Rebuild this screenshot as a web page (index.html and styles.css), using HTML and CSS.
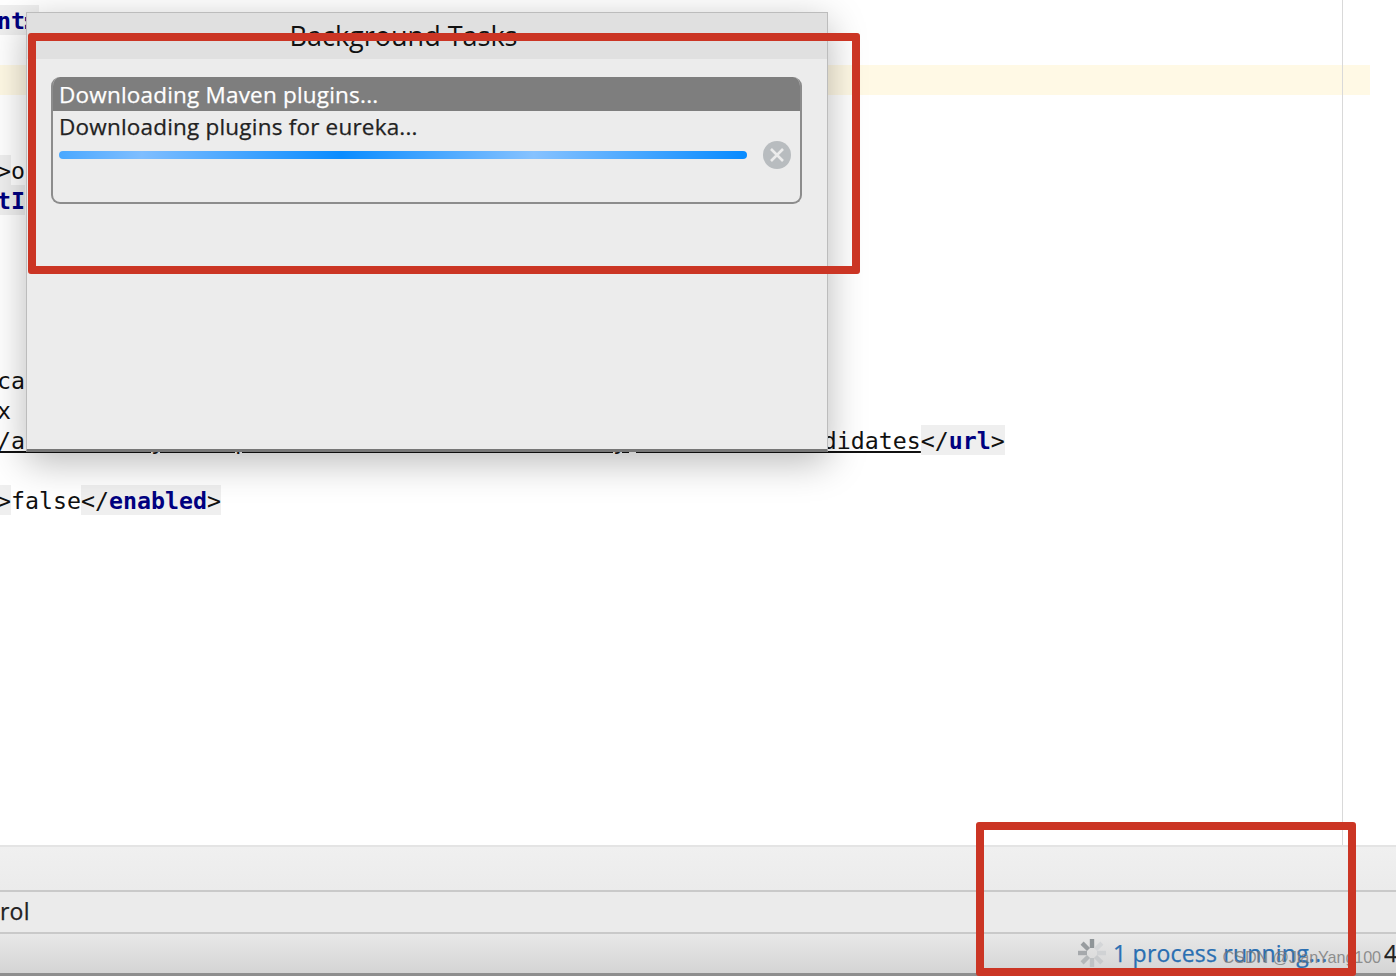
FILE: index.html
```html
<!DOCTYPE html>
<html lang="en">
<head>
<meta charset="utf-8">
<title>Background Tasks</title>
<link rel="stylesheet" href="styles.css">
</head>
<body>
<div class="app">
  <main class="editor">
    <div class="margin-guide"></div>
    <div class="line"><span class="tag"><b>nt</b><b class="colon">:</b></span></div>
    <div class="line"></div>
    <div class="line current"></div>
    <div class="line"></div>
    <div class="line"></div>
    <div class="line"><span class="tag">&gt;</span>o</div>
    <div class="line"><span class="tag"><b>tI</b></span></div>
    <div class="line"></div>
    <div class="line"></div>
    <div class="line"></div>
    <div class="line"></div>
    <div class="line"></div>
    <div class="line">ca</div>
    <div class="line">x c</div>
    <div class="line"><u>/artifactory/lib-plutonium-releaseartifactory,release-rccandidates</u><span class="tag">&lt;/<b>url</b>&gt;</span></div>
    <div class="line"></div>
    <div class="line"><span class="tag">&gt;</span>false<span class="tag">&lt;/<b>enabled</b>&gt;</span></div>
  </main>

  <footer class="bars">
    <div class="bar bar-tools"></div>
    <div class="bar bar-tabs"><span class="tab-label">rol</span></div>
    <div class="bar bar-status">
      <svg class="spinner" width="30" height="30" viewBox="0 0 30 30" aria-hidden="true">
        <g stroke-width="4.4" fill="none">
          <path d="M15 1v9" stroke="#8f9598"/>
          <path d="M24.9 5.1l-6.4 6.4" stroke="#d4d6d8"/>
          <path d="M29 15h-9" stroke="#d0d2d4"/>
          <path d="M24.9 24.9l-6.4-6.4" stroke="#c8cacc"/>
          <path d="M15 29v-9" stroke="#bfc2c4"/>
          <path d="M5.1 24.9l6.4-6.4" stroke="#b4b7b9"/>
          <path d="M1 15h9" stroke="#a6a9ac"/>
          <path d="M5.1 5.1l6.4 6.4" stroke="#989c9f"/>
        </g>
      </svg>
      <span class="process">1 process running...</span>
      <span class="watermark">CSDN @JianYang100</span>
      <span class="position">4</span>
    </div>
  </footer>

  <section class="dialog">
    <header class="dialog-title">Background Tasks</header>
    <div class="dialog-body">
      <div class="task">
        <div class="task-head">Downloading Maven plugins...</div>
        <div class="task-text">Downloading plugins for eureka...</div>
        <div class="task-progress">
          <div class="progress"></div>
          <svg class="cancel" width="30" height="30" viewBox="0 0 30 30" aria-hidden="true">
            <circle cx="15" cy="15" r="14" fill="#b8bcbf"/>
            <path d="M9 9l12 12M21 9L9 21" stroke="#ececec" stroke-width="2.6" fill="none"/>
          </svg>
        </div>
      </div>
    </div>
  </section>

  <div class="mark mark-dialog"></div>
  <div class="mark mark-status"></div>
</div>
</body>
</html>
```

FILE: styles.css
```css
* { box-sizing: border-box; }

html, body {
  margin: 0;
  height: 100%;
  background: #fff;
}

.app {
  position: relative;
  display: flex;
  flex-direction: column;
  width: 1396px;
  height: 976px;
  overflow: hidden;
  font-family: "Open Sans", "DejaVu Sans", sans-serif;
}

/* Editor */
.editor {
  position: relative;
  flex: 1;
  padding-top: 5px;
  background: #fff;
  font-family: "DejaVu Sans Mono", monospace;
  font-size: 23.25px;
  color: #111;
}

.margin-guide {
  position: absolute;
  top: 0;
  bottom: 0;
  left: 1342px;
  width: 1px;
  background: #d9d9d9;
}

.line {
  height: 30px;
  line-height: 32px;
  margin-left: -3px;
  white-space: pre;
}

.line.current {
  width: 1373px;
  background: #fff9e5;
}

.tag {
  display: inline-block;
  height: 30px;
  background: #efefef;
}

.tag b {
  color: #000080;
}

.tag .colon {
  margin-left: -5px;
  padding-right: 5px;
}

.line u {
  text-underline-offset: 2px;
}

/* Bottom bars */
.bars {
  flex: none;
  font-size: 23px;
  letter-spacing: 0.2px;
  -webkit-text-stroke: 0.25px;
}

.bar {
  display: flex;
  align-items: center;
  background: linear-gradient(#f0f0f0, #ebebeb);
}

.bar-tools {
  height: 47px;
  border-top: 2px solid #e4e4e4;
  border-bottom: 2px solid #c9c9c9;
}

.bar-tabs {
  height: 42px;
  padding-bottom: 3px;
  border-bottom: 2px solid #c9c9c9;
  background: #ebebeb;
}

.tab-label {
  color: #222;
}

.bar-status {
  justify-content: flex-end;
  height: 42px;
  padding-bottom: 2px;
  border-bottom: 3px solid #8e8e8e;
  background: linear-gradient(#e8e8e8, #d4d4d4);
}

.spinner {
  flex: none;
  margin-right: 6px;
}

.process {
  color: #2a6fb2;
  white-space: nowrap;
}

.watermark {
  margin-left: -105px;
  margin-top: 9px;
  font-family: "Liberation Sans", sans-serif;
  font-size: 16.2px;
  letter-spacing: -0.1px;
  -webkit-text-stroke: 0;
  color: rgba(120, 120, 120, 0.8);
  white-space: nowrap;
}

.position {
  margin-left: 3px;
  width: 12px;
  overflow: hidden;
  color: #222;
}

/* Dialog */
.dialog {
  position: absolute;
  top: 12px;
  left: 26px;
  width: 802px;
  height: 440px;
  display: flex;
  flex-direction: column;
  border: 1px solid #bcbcbc;
  border-bottom: 3px solid #777;
  background: #ececec;
  box-shadow: 0 10px 36px rgba(0, 0, 0, 0.28);
}

.dialog-title {
  flex: none;
  height: 46px;
  padding-right: 47px;
  text-align: center;
  font-size: 27px;
  line-height: 46px;
  color: #111;
  background: #e0e0e0;
}

.dialog-body {
  flex: 1;
  padding: 18px 25px 0 24px;
}

.task {
  height: 127px;
  border: 2px solid #8c8c8c;
  border-top: 0;
  border-radius: 9px;
  overflow: hidden;
  font-size: 22.5px;
  letter-spacing: 0.2px;
  -webkit-text-stroke: 0.25px;
  color: #222;
}

.task-head {
  height: 34px;
  margin: 0 -2px;
  padding-left: 8px;
  line-height: 35px;
  color: #fff;
  background: #7e7e7e;
}

.task-text {
  height: 29px;
  padding-left: 6px;
  line-height: 32px;
}

.task-progress {
  display: flex;
  align-items: center;
  gap: 15px;
  padding-left: 6px;
}

.progress {
  width: 688px;
  height: 8px;
  border-radius: 4px;
  background: linear-gradient(90deg, #4aa8ff 0, #7fbeff 12%, #0a8cff 41%, #86c2ff 69%, #0a8cff 99%);
}

.cancel {
  flex: none;
}

/* Red annotations */
.mark {
  position: absolute;
  border: 8px solid #cb3524;
  border-radius: 3px;
}

.mark-dialog {
  top: 33px;
  left: 28px;
  width: 832px;
  height: 241px;
}

.mark-status {
  top: 822px;
  left: 976px;
  width: 380px;
  height: 154px;
}
```
